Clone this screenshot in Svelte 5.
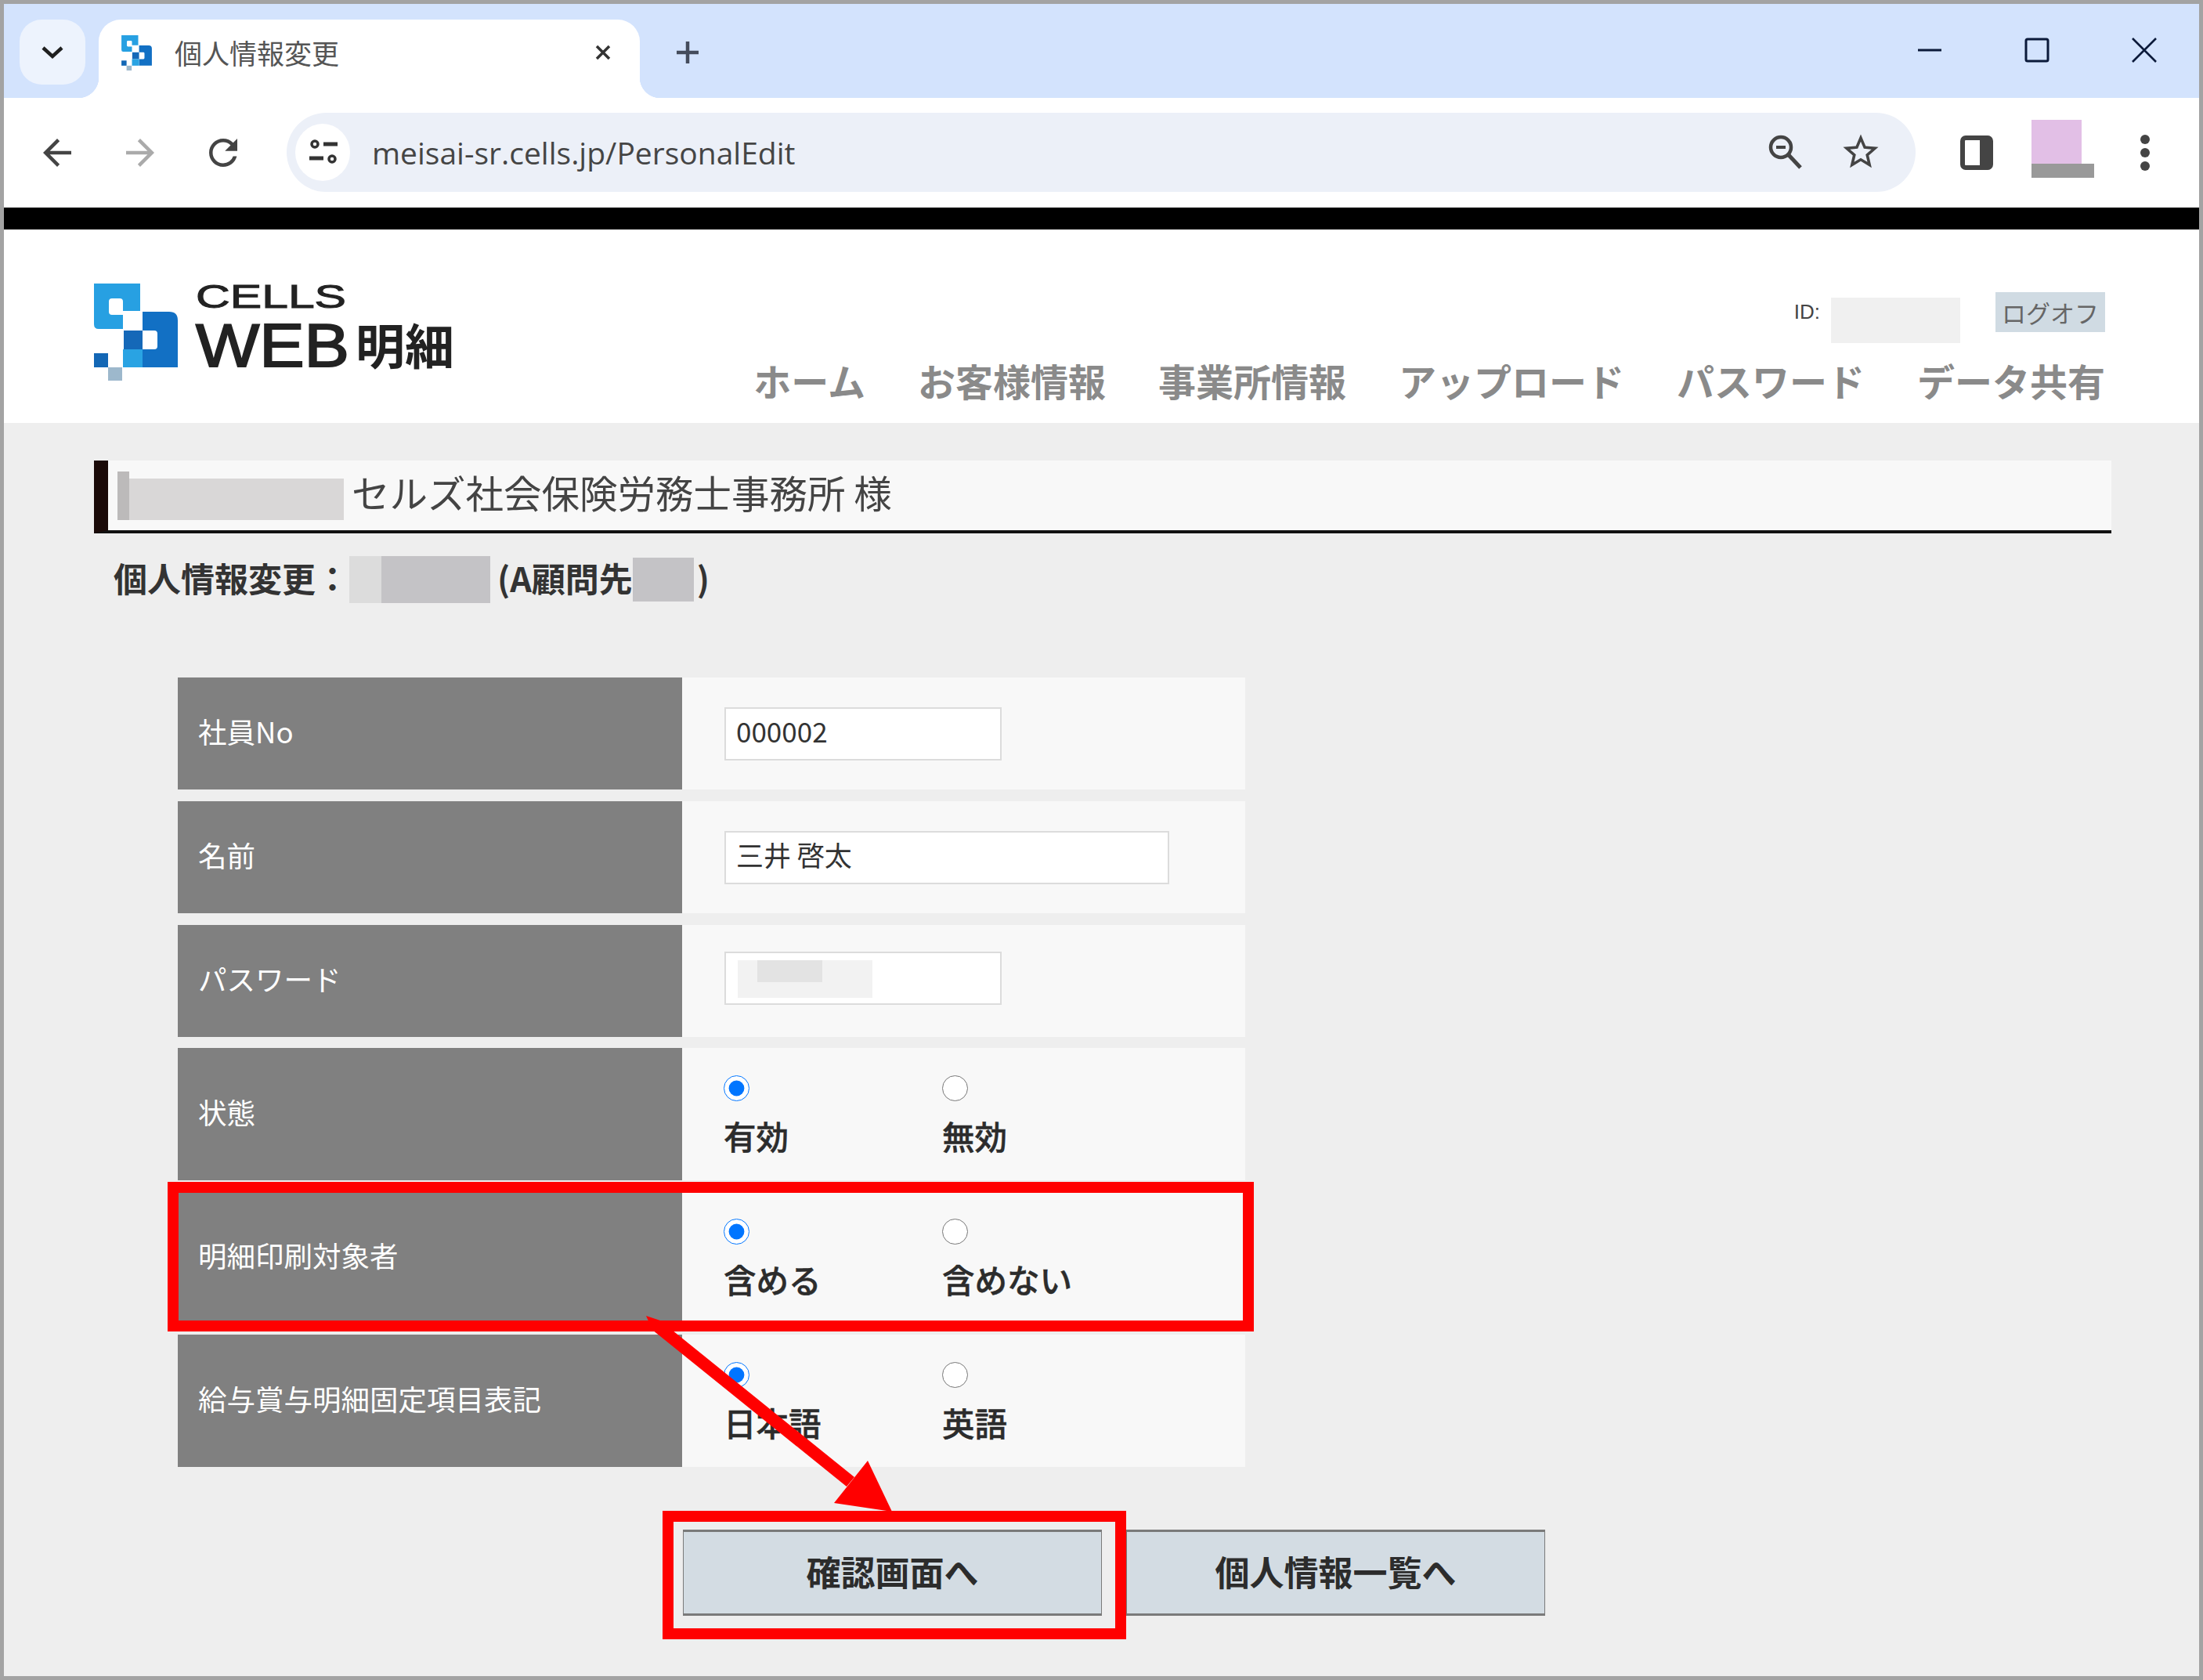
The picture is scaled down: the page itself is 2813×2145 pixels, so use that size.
<script>
  let values = $state({ status: 'on', print: 'in', lang: 'ja' });

  const navItems = ['ホーム', 'お客様情報', '事業所情報', 'アップロード', 'パスワード', 'データ共有'];

  const rows = [
    { label: '社員No', type: 'text', value: '000002', size: 'short' },
    { label: '名前', type: 'text', value: '三井 啓太', size: 'long' },
    { label: 'パスワード', type: 'secret', size: 'short' },
    { label: '状態', type: 'radio', key: 'status', options: [['on', '有効'], ['off', '無効']] },
    { label: '明細印刷対象者', type: 'radio', key: 'print', options: [['in', '含める'], ['out', '含めない']] },
    { label: '給与賞与明細固定項目表記', type: 'radio', key: 'lang', options: [['ja', '日本語'], ['en', '英語']] }
  ];
</script>

{#snippet mark()}
  <path d="M0 0H59V35H37V23Q37 19 33 19H23Q19 19 19 23V36Q19 40 23 40H37V58H6Q0 58 0 52Z" fill="#27a0e2" />
  <path d="M62 36H96Q107 36 107 47V107H62V84H77Q81 84 81 80V64Q81 60 77 60H62Z" fill="#1270c4" />
  <rect x="38" y="60" width="24" height="24" fill="#1568b8" />
  <rect x="37" y="84" width="25" height="23" fill="#29a3e3" />
  <rect x="0" y="89" width="18" height="18" fill="#1367b5" />
  <rect x="18" y="107" width="18" height="17" fill="#9db8cc" />
{/snippet}

<div class="frame">
  <div class="tabstrip">
    <div class="tab-menu">
      <svg width="30" height="18" viewBox="0 0 30 18"><path d="M3 3l12 11L27 3" fill="none" stroke="#1f1f1f" stroke-width="4.5" /></svg>
    </div>
    <div class="tab">
      <svg class="favicon" width="41" height="45" viewBox="0 0 107 124">{@render mark()}</svg>
      <span class="tab-title">個人情報変更</span>
      <svg class="tab-close" width="24" height="24" viewBox="0 0 24 24"><path d="M4 4l16 16M20 4L4 20" stroke="#333" stroke-width="3.5" /></svg>
    </div>
    <svg class="new-tab" width="32" height="32" viewBox="0 0 32 32"><path d="M16 2v28M2 16h28" stroke="#444c5c" stroke-width="4.5" /></svg>
    <div class="win-controls">
      <svg width="32" height="32" viewBox="0 0 32 32"><path d="M1 16h30" stroke="#0b1a3a" stroke-width="3" /></svg>
      <svg width="32" height="32" viewBox="0 0 32 32"><rect x="2" y="2" width="28" height="28" rx="2" fill="none" stroke="#0b1a3a" stroke-width="3" /></svg>
      <svg width="32" height="32" viewBox="0 0 32 32"><path d="M1 1l30 30M31 1L1 31" stroke="#0b1a3a" stroke-width="2.6" /></svg>
    </div>
  </div>

  <div class="toolbar">
    <svg class="tool" width="54" height="54" viewBox="0 0 24 24"><path fill="#444" d="M20 11H7.83l5.59-5.59L12 4l-8 8 8 8 1.41-1.41L7.83 13H20z" /></svg>
    <svg class="tool" width="54" height="54" viewBox="0 0 24 24"><path fill="#aaa" d="M4 11h12.17l-5.59-5.59L12 4l8 8-8 8-1.41-1.41L16.17 13H4z" /></svg>
    <svg class="tool" width="54" height="54" viewBox="0 0 24 24"><path fill="#444" d="M17.65 6.35A7.958 7.958 0 0 0 12 4c-4.42 0-7.99 3.58-7.99 8s3.57 8 7.99 8c3.73 0 6.84-2.55 7.73-6h-2.08A5.99 5.99 0 0 1 12 18c-3.31 0-6-2.69-6-6s2.69-6 6-6c1.66 0 3.14.69 4.22 1.78L13 11h7V4l-2.35 2.35z" /></svg>
    <div class="omnibox">
      <div class="site-info">
        <svg width="40" height="34" viewBox="0 0 40 34">
          <circle cx="10" cy="7" r="4" fill="none" stroke="#333" stroke-width="3.5" />
          <path d="M21 7h18M3 25h18" stroke="#333" stroke-width="5" />
          <circle cx="32" cy="26" r="4" fill="none" stroke="#333" stroke-width="3.5" />
        </svg>
      </div>
      <span class="url">meisai-sr.cells.jp/PersonalEdit</span>
      <svg class="zoom-icon" width="48" height="48" viewBox="0 0 48 48">
        <circle cx="18" cy="18" r="13" fill="none" stroke="#444" stroke-width="4.5" />
        <path d="M12 18h12" stroke="#444" stroke-width="4" />
        <path d="M28 28l15 16" stroke="#444" stroke-width="5" />
      </svg>
      <svg class="star-icon" width="54" height="54" viewBox="0 0 24 24"><path fill="#444" d="M22 9.24l-7.19-.62L12 2 9.19 8.63 2 9.24l5.46 4.73L5.82 21 12 17.27 18.18 21l-1.63-7.03L22 9.24zM12 15.4l-3.76 2.27 1-4.28-3.32-2.88 4.38-.38L12 6.1l1.71 4.04 4.38.38-3.32 2.88 1 4.28L12 15.4z" /></svg>
    </div>
    <svg class="side-icon" width="42" height="44" viewBox="0 0 42 44">
      <rect x="3" y="3" width="36" height="38" rx="4" fill="#fff" stroke="#444" stroke-width="6" />
      <rect x="25" y="3" width="14" height="38" fill="#444" />
    </svg>
    <div class="avatar"><div class="avatar-pink"></div><div class="avatar-grey"></div></div>
    <div class="dots"><i></i><i></i><i></i></div>
  </div>

  <div class="blackbar"></div>

  <header class="site-head">
    <svg class="logo" width="470" height="124" viewBox="0 0 470 124">
      {@render mark()}
      <text x="130" y="31" font-size="42" textLength="192" lengthAdjust="spacingAndGlyphs" class="logo-cells">CELLS</text>
      <text x="130" y="106" font-size="78" textLength="196" lengthAdjust="spacingAndGlyphs" class="logo-web">WEB</text>
      <text x="334" y="104" font-size="62" textLength="126" lengthAdjust="spacingAndGlyphs" class="logo-kanji">明細</text>
    </svg>
    <div class="head-right">
      <div class="user-row">
        <span class="user-id">ID:</span>
        <span class="user-blur"></span>
        <button class="logoff">ログオフ</button>
      </div>
      <nav class="nav">
        {#each navItems as item}
          <span>{item}</span>
        {/each}
      </nav>
    </div>
  </header>

  <main class="content">
    <div class="office">
      <span class="office-blur"><i></i></span>
      <span class="office-name">セルズ社会保険労務士事務所 様</span>
    </div>

    <div class="subhead">
      <span class="sub-text">個人情報変更：</span>
      <span class="sub-blur-a"></span>
      <span class="sub-text">(A顧問先</span>
      <span class="sub-blur-b"></span>
      <span class="sub-text">)</span>
    </div>

    <div class="form">
      {#each rows as row}
        <div class="row" class:radio-row={row.type === 'radio'}>
          <div class="row-label">{row.label}</div>
          <div class="row-value">
            {#if row.type === 'text'}
              <input class="field {row.size}" type="text" value={row.value} />
            {:else if row.type === 'secret'}
              <div class="secret">
                <input class="field {row.size}" type="text" />
                <span class="secret-blur"><i></i></span>
              </div>
            {:else}
              {#each row.options as [val, text]}
                <label class="option">
                  <input type="radio" name={row.key} value={val} bind:group={values[row.key]} />
                  <span>{text}</span>
                </label>
              {/each}
            {/if}
          </div>
        </div>
      {/each}
    </div>

    <div class="actions">
      <button class="action">確認画面へ</button>
      <button class="action">個人情報一覧へ</button>
    </div>
  </main>

  <!-- 赤枠と矢印の注釈 -->
  <svg class="annotations" width="2813" height="2145" viewBox="0 0 2813 2145">
    <rect x="221" y="1516" width="1373" height="177" fill="none" stroke="#ff0000" stroke-width="14" />
    <rect x="853" y="1936" width="578" height="150" fill="none" stroke="#ff0000" stroke-width="14" />
    <path d="M825 1680L843 1686L1091 1886L1081 1898L833 1698Z" fill="#ff0000" />
    <path d="M1108 1865L1065 1919L1139 1930Z" fill="#ff0000" />
  </svg>
</div>

<style>
  :global(body) {
    margin: 0;
    background: #fff;
  }

  .frame {
    position: relative;
    box-sizing: border-box;
    width: 2813px;
    height: 2145px;
    border: 5px solid #a3a3a3;
    display: flex;
    flex-direction: column;
    overflow: hidden;
    font-family: 'Noto Sans CJK JP', sans-serif;
    color: #333;
  }

  .tabstrip {
    height: 120px;
    flex: none;
    background: #d3e3fd;
    display: flex;
    align-items: flex-start;
    position: relative;
  }

  .tab-menu {
    width: 84px;
    height: 83px;
    margin: 20px 0 0 20px;
    border-radius: 28px;
    background: #edf3fd;
    display: flex;
    align-items: center;
    justify-content: center;
  }

  .tab {
    position: relative;
    width: 691px;
    height: 100px;
    margin: 20px 0 0 17px;
    padding-left: 28px;
    box-sizing: border-box;
    background: #fff;
    border-radius: 28px 28px 0 0;
    display: flex;
    align-items: center;
  }

  .tab::before,
  .tab::after {
    content: '';
    position: absolute;
    bottom: 0;
    width: 26px;
    height: 26px;
  }

  .tab::before {
    left: -26px;
    background: radial-gradient(circle at 0 0, transparent 26px, #fff 26.5px);
  }

  .tab::after {
    right: -26px;
    background: radial-gradient(circle at 100% 0, transparent 26px, #fff 26.5px);
  }

  .favicon {
    margin-top: -16px;
  }

  .tab-title {
    margin: -18px 0 0 28px;
    font-size: 35px;
    line-height: 1;
    color: #555;
  }

  .tab-close {
    position: absolute;
    left: 632px;
    top: 30px;
  }

  .new-tab {
    margin: 46px 0 0 45px;
  }

  .win-controls {
    margin: 43px 54px 0 auto;
    display: flex;
    gap: 105px;
  }

  .toolbar {
    height: 140px;
    flex: none;
    background: #fff;
    border-radius: 24px 24px 0 0;
    display: flex;
    align-items: center;
    padding-left: 41px;
    position: relative;
  }

  .tool {
    margin-right: 52px;
  }

  .tool:nth-child(3) {
    margin-right: 54px;
  }

  .omnibox {
    width: 2080px;
    height: 101px;
    margin-top: -2px;
    border-radius: 51px;
    background: #ecf0f8;
    display: flex;
    align-items: center;
  }

  .site-info {
    width: 70px;
    height: 73px;
    margin-left: 11px;
    border-radius: 50%;
    background: #fff;
    display: flex;
    align-items: center;
    justify-content: center;
  }

  .url {
    margin-left: 28px;
    font-family: 'Open Sans', sans-serif;
    font-size: 39px;
    color: #454545;
  }

  .zoom-icon {
    margin-left: auto;
  }

  .star-icon {
    margin: 0 43px 0 45px;
  }

  .side-icon {
    margin-left: 57px;
  }

  .avatar {
    width: 80px;
    margin: -10px 0 0 49px;
  }

  .avatar-pink {
    width: 64px;
    height: 56px;
    background: #e2bfe6;
  }

  .avatar-grey {
    height: 18px;
    background: #999;
  }

  .dots {
    margin-left: 59px;
    display: flex;
    flex-direction: column;
    gap: 5px;
  }

  .dots i {
    width: 12px;
    height: 12px;
    border-radius: 50%;
    background: #444;
  }

  .blackbar {
    height: 28px;
    flex: none;
    background: #000;
  }

  .site-head {
    height: 247px;
    flex: none;
    background: #fff;
    display: flex;
    justify-content: space-between;
  }

  .logo {
    margin: 69px 0 0 115px;
  }

  .logo text {
    fill: #222;
    font-family: 'Liberation Sans', sans-serif;
  }

  .logo .logo-cells {
    stroke: #222;
    stroke-width: 1;
  }

  .logo .logo-web {
    stroke: #222;
    stroke-width: 2;
  }

  .logo .logo-kanji {
    font-family: 'Noto Sans CJK JP', sans-serif;
    font-weight: 700;
  }

  .head-right {
    padding: 80px 120px 0 0;
    display: flex;
    flex-direction: column;
    align-items: flex-end;
  }

  .user-row {
    height: 51px;
    display: flex;
    align-items: flex-start;
  }

  .user-id {
    margin-top: 10px;
    font-family: 'Liberation Sans', sans-serif;
    font-size: 26px;
    color: #444;
  }

  .user-blur {
    width: 165px;
    height: 58px;
    margin: 7px 45px 0 14px;
    background: #f0f0f0;
  }

  .logoff {
    width: 140px;
    height: 51px;
    padding: 0;
    border: none;
    background: #d0dbe3;
    color: #666;
    font-family: inherit;
    font-size: 31px;
  }

  .nav {
    margin-top: 26px;
    display: flex;
    gap: 67px;
    font-size: 48px;
    font-weight: 700;
    line-height: 70px;
    color: #8a8a8a;
  }

  .content {
    flex: 1;
    background: #eeeeee;
  }

  .office {
    box-sizing: border-box;
    width: 2576px;
    height: 93px;
    margin: 48px 0 0 115px;
    padding-bottom: 4px;
    border-left: 18px solid #1a0a08;
    border-bottom: 4px solid #111;
    background: #f8f8f8;
    display: flex;
    align-items: center;
    color: #444;
  }

  .office-name {
    margin-top: -6px;
    font-size: 48.5px;
  }

  .office-blur {
    position: relative;
    width: 289px;
    height: 53px;
    margin: 14px 10px 0 12px;
    background: #d9d7d7;
  }

  .office-blur i {
    position: absolute;
    left: 0;
    bottom: 0;
    width: 15px;
    height: 62px;
    background: #bcbaba;
  }

  .subhead {
    height: 60px;
    margin: 29px 0 0 140px;
    display: flex;
    align-items: center;
    font-size: 43px;
    font-weight: 700;
    color: #333;
  }

  .sub-text {
    margin-top: -6px;
  }

  .sub-blur-a {
    width: 180px;
    height: 60px;
    margin: 0 9px 0 0;
    background: linear-gradient(90deg, #dcdcdc 23%, #c4c3c6 23%);
  }

  .sub-blur-b {
    width: 78px;
    height: 56px;
    margin-right: 4px;
    background: #c4c3c6;
  }

  .form {
    margin: 95px 0 0 222px;
    display: flex;
    flex-direction: column;
    gap: 15px;
  }

  .row {
    display: flex;
    height: 143px;
  }

  .row.radio-row {
    height: 169px;
    margin-top: -1px;
  }

  .row-label {
    width: 644px;
    padding: 0 0 7px 26px;
    box-sizing: border-box;
    background: #808080;
    color: #fff;
    font-size: 36.5px;
    display: flex;
    align-items: center;
  }

  .row-value {
    width: 719px;
    padding-left: 53px;
    box-sizing: border-box;
    background: #f8f8f8;
    display: flex;
    align-items: center;
  }

  .field {
    display: block;
    height: 68px;
    box-sizing: border-box;
    margin: 0 0 0 1px;
    padding: 0 13px 8px;
    border: 2px solid #dcdcdc;
    background: #fff;
    font-family: inherit;
    font-size: 35px;
    color: #333;
    outline: none;
  }

  .field.short {
    width: 354px;
  }

  .field.long {
    width: 568px;
  }

  .secret {
    position: relative;
    margin-top: -8px;
  }

  .secret-blur {
    position: absolute;
    left: 18px;
    top: 11px;
    width: 172px;
    height: 48px;
    background: #f2f2f2;
  }

  .secret-blur i {
    position: absolute;
    left: 25px;
    top: 0;
    width: 83px;
    height: 28px;
    background: #e3e3e3;
  }

  .option {
    width: 279px;
    height: 100%;
    padding-top: 35px;
    box-sizing: border-box;
    display: flex;
    flex-direction: column;
    font-size: 41.5px;
    font-weight: 500;
    color: #2c2c2c;
    -webkit-text-stroke: 0.5px #2c2c2c;
  }

  .option input {
    width: 33px;
    height: 33px;
    margin: 0;
  }

  .option span {
    margin-top: 14px;
    line-height: 60px;
  }

  .actions {
    margin: 80px 0 0 867px;
    display: flex;
    gap: 31px;
  }

  .action {
    width: 535px;
    height: 110px;
    padding: 0 0 4px;
    box-sizing: border-box;
    border: 1px solid #7a7a7a;
    border-top-width: 3px;
    border-bottom-width: 3px;
    background: #d3dce3;
    color: #2c2c2c;
    font-family: inherit;
    font-size: 44px;
    font-weight: 700;
  }

  .annotations {
    position: absolute;
    left: -5px;
    top: -5px;
    pointer-events: none;
  }
</style>
